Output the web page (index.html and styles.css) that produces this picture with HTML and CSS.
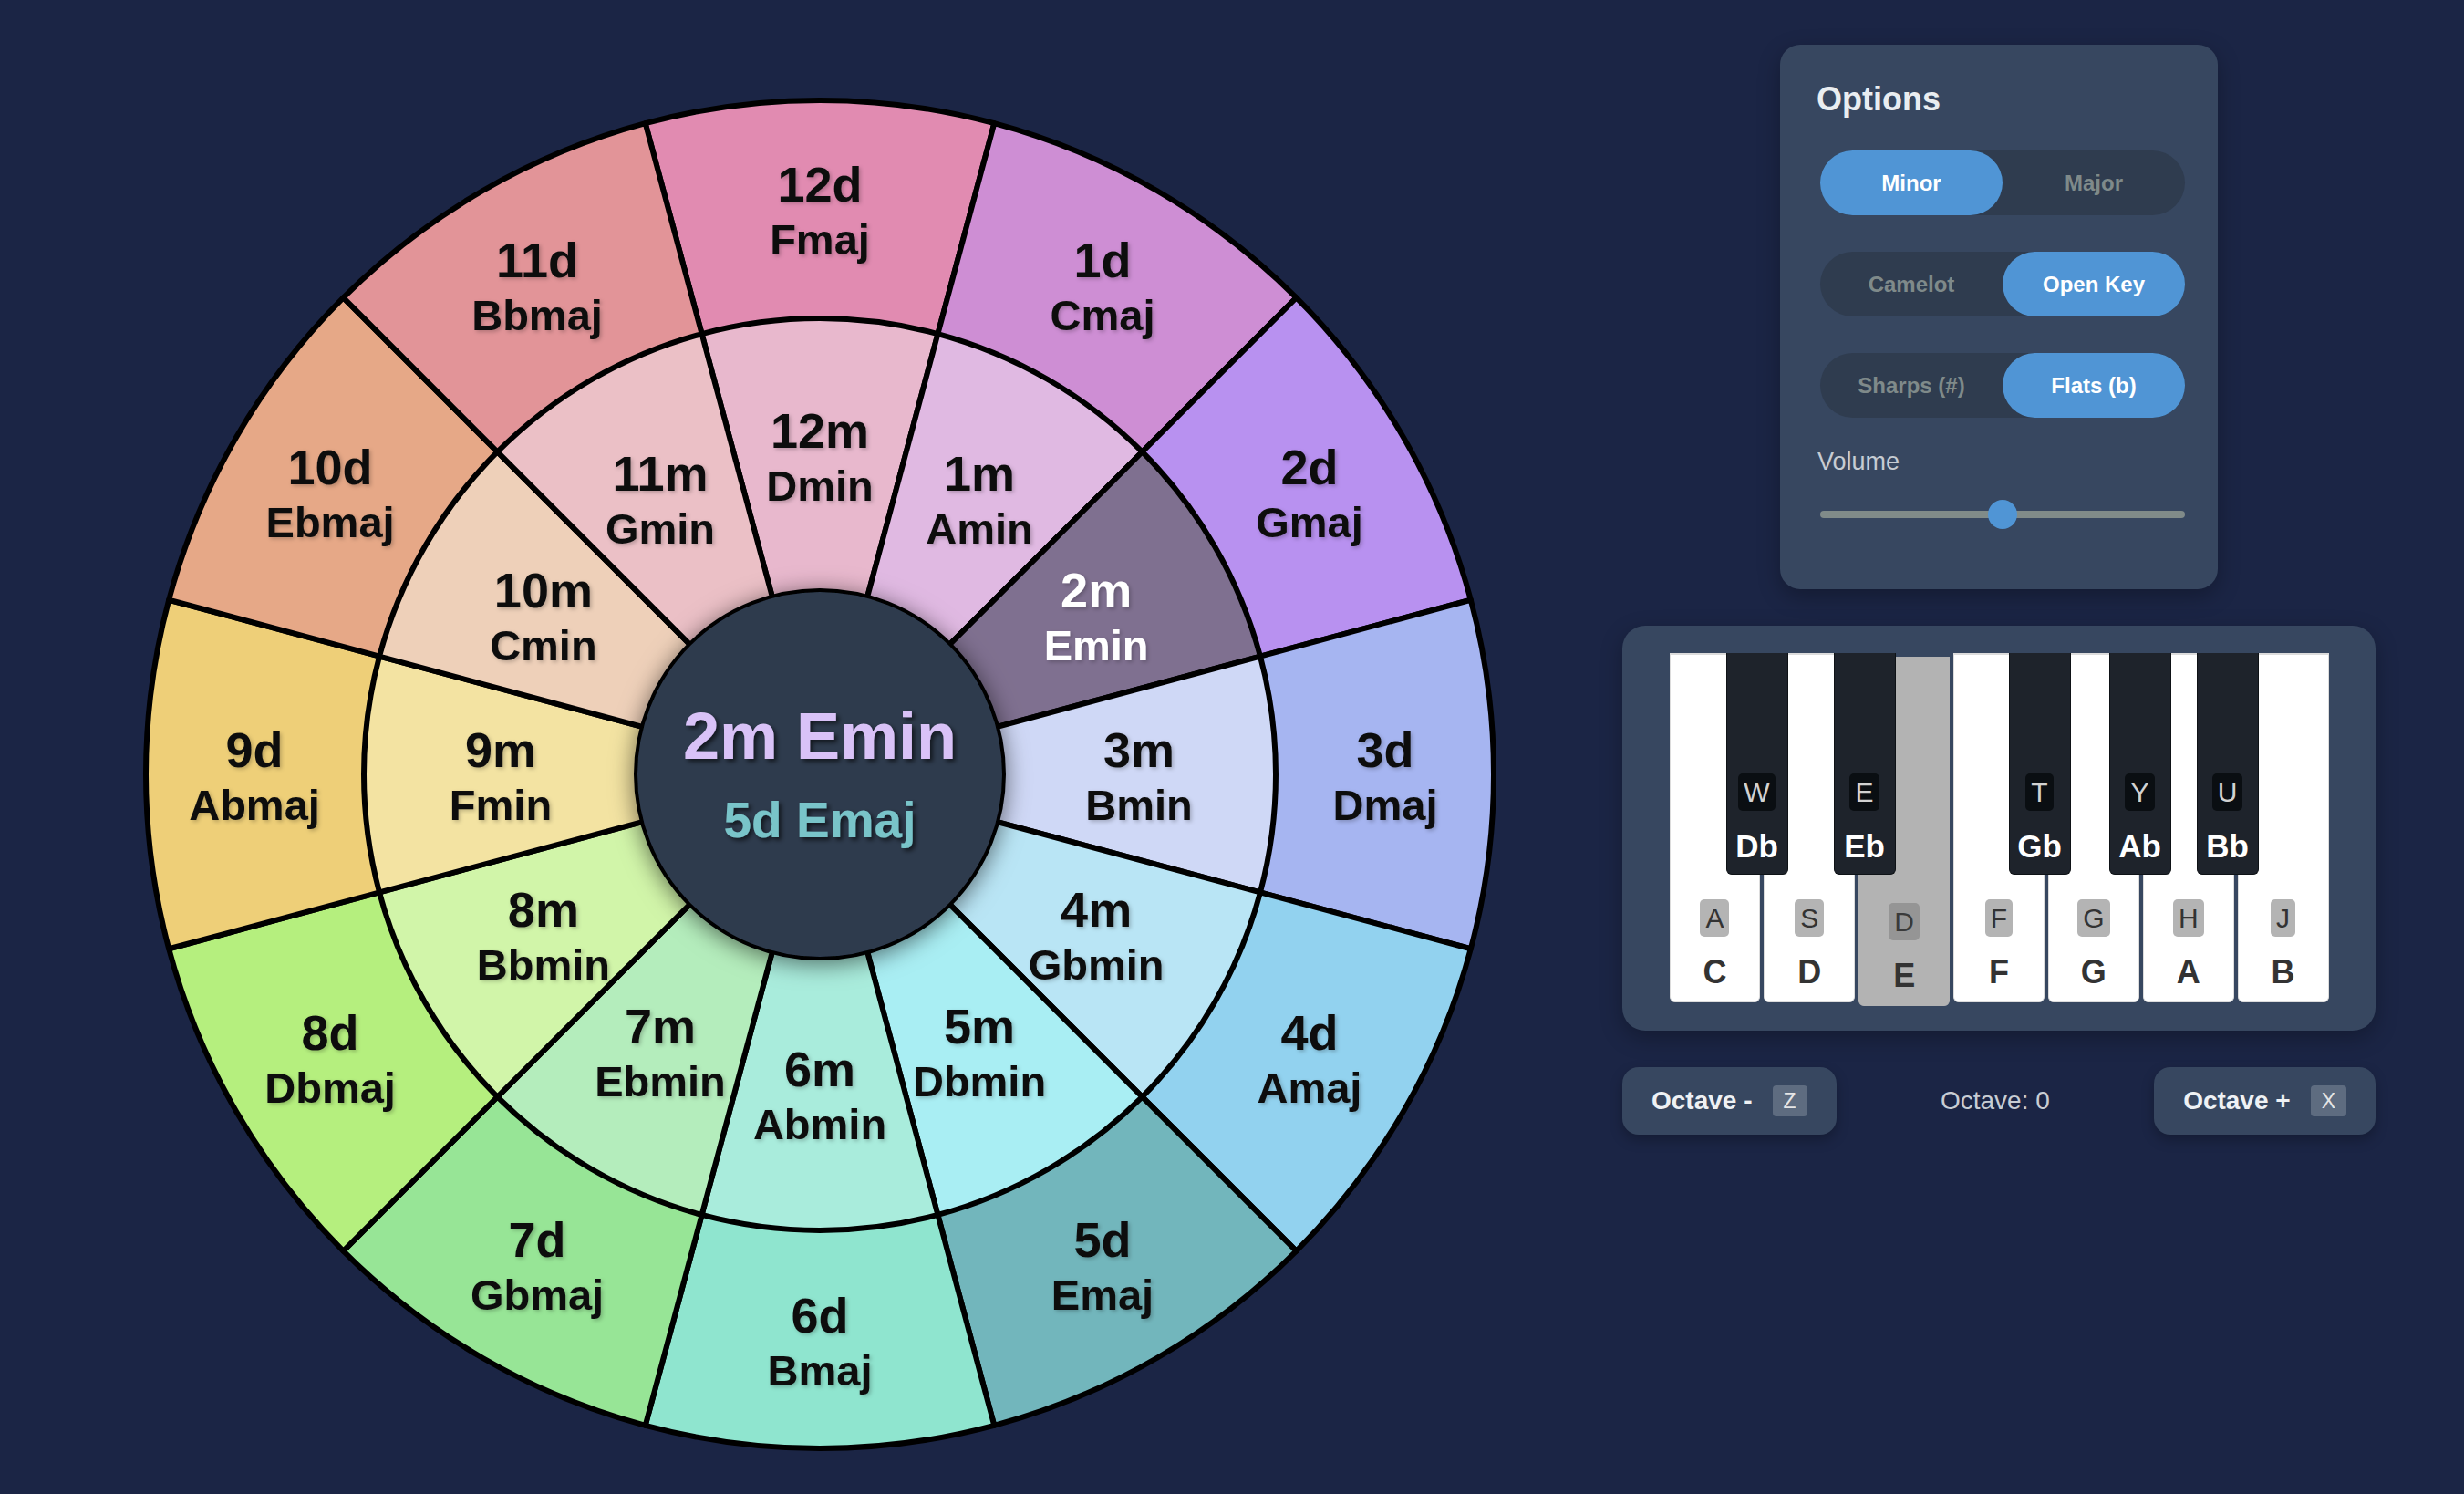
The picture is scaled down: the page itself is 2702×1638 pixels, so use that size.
FILE: index.html
```html
<!DOCTYPE html>
<html lang="en">
<head>
<meta charset="utf-8">
<title>Circle of Fifths</title>
<link rel="stylesheet" href="styles.css">
</head>
<body>
<main class="app">
  <section class="wheel-wrap">
    <svg class="wheel" viewBox="0 0 1480 1480" width="1480" height="1480" xmlns="http://www.w3.org/2000/svg">
      <defs>
        <filter id="hubShadow" x="-40%" y="-40%" width="180%" height="180%">
          <feDropShadow dx="0" dy="4" stdDeviation="13" flood-color="#000" flood-opacity="0.55"/>
        </filter>
        <filter id="txtShadow" x="-10%" y="-30%" width="120%" height="160%">
          <feDropShadow dx="3" dy="3" stdDeviation="2.5" flood-color="#000" flood-opacity="0.6"/>
        </filter>
        <filter id="lblShadow" x="-10%" y="-20%" width="120%" height="140%">
          <feDropShadow dx="2" dy="2" stdDeviation="2" flood-color="#000" flood-opacity="0.22"/>
        </filter>
      </defs>

      <g class="ring-outer">
        <path class="o0" d="M740 740 L548.73 26.18 A739 739 0 0 1 931.27 26.18Z"/>
        <path class="o1" d="M740 740 L931.27 26.18 A739 739 0 0 1 1262.55 217.45Z"/>
        <path class="o2" d="M740 740 L1262.55 217.45 A739 739 0 0 1 1453.82 548.73Z"/>
        <path class="o3" d="M740 740 L1453.82 548.73 A739 739 0 0 1 1453.82 931.27Z"/>
        <path class="o4" d="M740 740 L1453.82 931.27 A739 739 0 0 1 1262.55 1262.55Z"/>
        <path class="o5" d="M740 740 L1262.55 1262.55 A739 739 0 0 1 931.27 1453.82Z"/>
        <path class="o6" d="M740 740 L931.27 1453.82 A739 739 0 0 1 548.73 1453.82Z"/>
        <path class="o7" d="M740 740 L548.73 1453.82 A739 739 0 0 1 217.45 1262.55Z"/>
        <path class="o8" d="M740 740 L217.45 1262.55 A739 739 0 0 1 26.18 931.27Z"/>
        <path class="o9" d="M740 740 L26.18 931.27 A739 739 0 0 1 26.18 548.73Z"/>
        <path class="o10" d="M740 740 L26.18 548.73 A739 739 0 0 1 217.45 217.45Z"/>
        <path class="o11" d="M740 740 L217.45 217.45 A739 739 0 0 1 548.73 26.18Z"/>
      </g>

      <g class="ring-inner">
        <path class="i0" d="M740 740 L610.59 257.04 A500 500 0 0 1 869.41 257.04Z"/>
        <path class="i1" d="M740 740 L869.41 257.04 A500 500 0 0 1 1093.55 386.45Z"/>
        <path class="i2" d="M740 740 L1093.55 386.45 A500 500 0 0 1 1222.96 610.59Z"/>
        <path class="i3" d="M740 740 L1222.96 610.59 A500 500 0 0 1 1222.96 869.41Z"/>
        <path class="i4" d="M740 740 L1222.96 869.41 A500 500 0 0 1 1093.55 1093.55Z"/>
        <path class="i5" d="M740 740 L1093.55 1093.55 A500 500 0 0 1 869.41 1222.96Z"/>
        <path class="i6" d="M740 740 L869.41 1222.96 A500 500 0 0 1 610.59 1222.96Z"/>
        <path class="i7" d="M740 740 L610.59 1222.96 A500 500 0 0 1 386.45 1093.55Z"/>
        <path class="i8" d="M740 740 L386.45 1093.55 A500 500 0 0 1 257.04 869.41Z"/>
        <path class="i9" d="M740 740 L257.04 869.41 A500 500 0 0 1 257.04 610.59Z"/>
        <path class="i10" d="M740 740 L257.04 610.59 A500 500 0 0 1 386.45 386.45Z"/>
        <path class="i11" d="M740 740 L386.45 386.45 A500 500 0 0 1 610.59 257.04Z"/>
      </g>

      <circle class="hub" cx="740" cy="740" r="202"/>

      <g class="labels">
        <g class="lbl" transform="translate(740 120)"><text class="num" y="-8">12d</text><text class="name" y="50">Fmaj</text></g>
        <g class="lbl" transform="translate(1050 203.06)"><text class="num" y="-8">1d</text><text class="name" y="50">Cmaj</text></g>
        <g class="lbl" transform="translate(1276.94 430)"><text class="num" y="-8">2d</text><text class="name" y="50">Gmaj</text></g>
        <g class="lbl" transform="translate(1360 740)"><text class="num" y="-8">3d</text><text class="name" y="50">Dmaj</text></g>
        <g class="lbl" transform="translate(1276.94 1050)"><text class="num" y="-8">4d</text><text class="name" y="50">Amaj</text></g>
        <g class="lbl" transform="translate(1050 1276.94)"><text class="num" y="-8">5d</text><text class="name" y="50">Emaj</text></g>
        <g class="lbl" transform="translate(740 1360)"><text class="num" y="-8">6d</text><text class="name" y="50">Bmaj</text></g>
        <g class="lbl" transform="translate(430 1276.94)"><text class="num" y="-8">7d</text><text class="name" y="50">Gbmaj</text></g>
        <g class="lbl" transform="translate(203.06 1050)"><text class="num" y="-8">8d</text><text class="name" y="50">Dbmaj</text></g>
        <g class="lbl" transform="translate(120 740)"><text class="num" y="-8">9d</text><text class="name" y="50">Abmaj</text></g>
        <g class="lbl" transform="translate(203.06 430)"><text class="num" y="-8">10d</text><text class="name" y="50">Ebmaj</text></g>
        <g class="lbl" transform="translate(430 203.06)"><text class="num" y="-8">11d</text><text class="name" y="50">Bbmaj</text></g>

        <g class="lbl" transform="translate(740 390)"><text class="num" y="-8">12m</text><text class="name" y="50">Dmin</text></g>
        <g class="lbl" transform="translate(915 436.89)"><text class="num" y="-8">1m</text><text class="name" y="50">Amin</text></g>
        <g class="lbl sel" transform="translate(1043.11 565)"><text class="num" y="-8">2m</text><text class="name" y="50">Emin</text></g>
        <g class="lbl" transform="translate(1090 740)"><text class="num" y="-8">3m</text><text class="name" y="50">Bmin</text></g>
        <g class="lbl" transform="translate(1043.11 915)"><text class="num" y="-8">4m</text><text class="name" y="50">Gbmin</text></g>
        <g class="lbl" transform="translate(915 1043.11)"><text class="num" y="-8">5m</text><text class="name" y="50">Dbmin</text></g>
        <g class="lbl" transform="translate(740 1090)"><text class="num" y="-8">6m</text><text class="name" y="50">Abmin</text></g>
        <g class="lbl" transform="translate(565 1043.11)"><text class="num" y="-8">7m</text><text class="name" y="50">Ebmin</text></g>
        <g class="lbl" transform="translate(436.89 915)"><text class="num" y="-8">8m</text><text class="name" y="50">Bbmin</text></g>
        <g class="lbl" transform="translate(390 740)"><text class="num" y="-8">9m</text><text class="name" y="50">Fmin</text></g>
        <g class="lbl" transform="translate(436.89 565)"><text class="num" y="-8">10m</text><text class="name" y="50">Cmin</text></g>
        <g class="lbl" transform="translate(565 436.89)"><text class="num" y="-8">11m</text><text class="name" y="50">Gmin</text></g>
      </g>

      <g class="hub-text">
        <text class="hub-minor" x="740" y="723">2m Emin</text>
        <text class="hub-major" x="740" y="809">5d Emaj</text>
      </g>
    </svg>
  </section>

  <aside class="side">
    <div class="panel options">
      <h2 class="options-title">Options</h2>
      <div class="toggle">
        <button class="toggle-btn active">Minor</button>
        <button class="toggle-btn">Major</button>
      </div>
      <div class="toggle">
        <button class="toggle-btn">Camelot</button>
        <button class="toggle-btn active">Open Key</button>
      </div>
      <div class="toggle">
        <button class="toggle-btn">Sharps (#)</button>
        <button class="toggle-btn active">Flats (b)</button>
      </div>
      <label class="volume-label" for="vol">Volume</label>
      <input class="volume" id="vol" type="range" min="0" max="100" value="50">
    </div>

    <div class="panel piano">
      <div class="keyboard">
        <div class="white-keys">
          <div class="wkey"><span class="kbd">A</span><span class="note">C</span></div>
          <div class="wkey"><span class="kbd">S</span><span class="note">D</span></div>
          <div class="wkey pressed"><span class="kbd">D</span><span class="note">E</span></div>
          <div class="wkey"><span class="kbd">F</span><span class="note">F</span></div>
          <div class="wkey"><span class="kbd">G</span><span class="note">G</span></div>
          <div class="wkey"><span class="kbd">H</span><span class="note">A</span></div>
          <div class="wkey"><span class="kbd">J</span><span class="note">B</span></div>
        </div>
        <div class="bkey bk-db"><span class="kbd">W</span><span class="note">Db</span></div>
        <div class="bkey bk-eb"><span class="kbd">E</span><span class="note">Eb</span></div>
        <div class="bkey bk-gb"><span class="kbd">T</span><span class="note">Gb</span></div>
        <div class="bkey bk-ab"><span class="kbd">Y</span><span class="note">Ab</span></div>
        <div class="bkey bk-bb"><span class="kbd">U</span><span class="note">Bb</span></div>
      </div>
    </div>

    <div class="octave-row">
      <button class="oct-btn">Octave - <span class="oct-kbd">Z</span></button>
      <span class="oct-label">Octave: 0</span>
      <button class="oct-btn">Octave + <span class="oct-kbd">X</span></button>
    </div>
  </aside>
</main>
</body>
</html>
```

FILE: styles.css
```css
* { box-sizing: border-box; }

html, body {
  margin: 0;
  padding: 0;
}

body {
  background: #1b2545;
  font-family: "Liberation Sans", Arial, Helvetica, sans-serif;
  width: 2702px;
  height: 1638px;
  overflow: hidden;
}

.app {
  display: flex;
  align-items: flex-start;
  gap: 140px;
  padding: 49px 0 0 159px;
}

/* ---------- Wheel ---------- */
.wheel-wrap {
  margin-top: 60px;
}

.wheel {
  display: block;
  width: 1480px;
  height: 1480px;
  overflow: visible;
}

.wheel path {
  stroke: #000;
  stroke-width: 6;
  stroke-linejoin: round;
}

.o0 { fill: #e18bb1; }
.o1 { fill: #ce8ed4; }
.o2 { fill: #b891f0; }
.o3 { fill: #a6b5f1; }
.o4 { fill: #92d2ef; }
.o5 { fill: #72b6bc; }
.o6 { fill: #8fe5cf; }
.o7 { fill: #97e596; }
.o8 { fill: #b5ef7e; }
.o9 { fill: #eecf78; }
.o10 { fill: #e6a887; }
.o11 { fill: #e29498; }

.i0 { fill: #e8b8cd; }
.i1 { fill: #e0b9e2; }
.i2 { fill: #7f7090; }
.i3 { fill: #cfd8f6; }
.i4 { fill: #b9e5f5; }
.i5 { fill: #a9eef3; }
.i6 { fill: #a9ecdc; }
.i7 { fill: #b4edbc; }
.i8 { fill: #d1f5a9; }
.i9 { fill: #f3e3a2; }
.i10 { fill: #eed0b9; }
.i11 { fill: #ebc0c6; }

.hub {
  fill: #2e3b4e;
  stroke: #000;
  stroke-width: 4;
  filter: url(#hubShadow);
}

.lbl {
  filter: url(#lblShadow);
}

.lbl text {
  font-family: "Liberation Sans", Arial, Helvetica, sans-serif;
  font-weight: 700;
  text-anchor: middle;
  fill: #111;
}

.lbl .num { font-size: 54px; }
.lbl .name { font-size: 47px; }

.lbl.sel text { fill: #fff; }

.hub-text text {
  font-family: "Liberation Sans", Arial, Helvetica, sans-serif;
  font-weight: 700;
  text-anchor: middle;
  filter: url(#txtShadow);
}

.hub-minor { font-size: 72px; fill: #d9c2f7; }
.hub-major { font-size: 55px; fill: #79c4c9; }

/* ---------- Side column ---------- */
.side {
  width: 826px;
  display: flex;
  flex-direction: column;
  align-items: center;
  gap: 40px;
}

.panel {
  background: #374760;
  box-shadow: 0 8px 24px rgba(0, 0, 0, 0.28);
}

.options {
  width: 480px;
  border-radius: 22px;
  padding: 42px 36px 66px 44px;
  display: flex;
  flex-direction: column;
}

.options-title {
  margin: 0 0 38px -4px;
  font-size: 36px;
  line-height: 36px;
  font-weight: 700;
  color: #e9edf0;
}

.toggle {
  display: flex;
  width: 400px;
  height: 71px;
  background: #2f3c4f;
  border-radius: 36px;
  margin-bottom: 40px;
}

.toggle:last-of-type { margin-bottom: 35px; }

.toggle-btn {
  flex: 1;
  border: none;
  background: transparent;
  border-radius: 36px;
  font-family: "Liberation Sans", Arial, Helvetica, sans-serif;
  font-size: 24px;
  font-weight: 700;
  color: #7f8a8a;
  padding: 0;
}

.toggle-btn.active {
  background: #5095d5;
  color: #fff;
}

.volume-label {
  display: block;
  margin: 0 0 28px -3px;
  font-size: 27px;
  line-height: 27px;
  color: #c6ccd3;
}

.volume {
  -webkit-appearance: none;
  appearance: none;
  width: 400px;
  height: 32px;
  margin: 0;
  background: transparent;
  display: block;
}

.volume::-webkit-slider-runnable-track {
  height: 8px;
  background: #808b89;
  border-radius: 4px;
}

.volume::-webkit-slider-thumb {
  -webkit-appearance: none;
  appearance: none;
  width: 32px;
  height: 32px;
  border-radius: 50%;
  background: #5095d5;
  margin-top: -12px;
  border: none;
}

/* ---------- Piano ---------- */
.piano {
  width: 826px;
  border-radius: 25px;
  padding: 30px 0 31px;
}

.keyboard {
  position: relative;
  width: 723px;
  height: 383px;
  margin: 0 auto;
}

.white-keys {
  display: flex;
  gap: 4px;
  height: 100%;
}

.wkey {
  flex: 1;
  background: #fff;
  border: 1px solid #dcdcdc;
  border-top-width: 2px;
  border-radius: 0 0 6px 6px;
  display: flex;
  flex-direction: column;
  align-items: center;
  justify-content: flex-end;
  padding-bottom: 14px;
}

.wkey.pressed {
  background: #b3b3b3;
  border-color: #b3b3b3;
  transform: translateY(4px);
}

.kbd {
  display: block;
  height: 41px;
  line-height: 41px;
  padding: 0 6px;
  border-radius: 5px;
  font-size: 30px;
  margin-bottom: 21px;
}

.wkey .kbd {
  background: #b4b4b4;
  color: #333;
}

.wkey.pressed .kbd {
  background: #959595;
  color: #3a3a3a;
}

.note {
  display: block;
  font-weight: 700;
  line-height: 1;
}

.wkey .note {
  font-size: 36px;
  color: #333;
}

.bkey {
  position: absolute;
  top: 0;
  width: 68px;
  height: 243px;
  background: #1e232b;
  border: 1px solid #0e1216;
  border-top: none;
  border-radius: 0 0 6px 6px;
  display: flex;
  flex-direction: column;
  align-items: center;
  justify-content: flex-end;
  padding-bottom: 13px;
  z-index: 2;
}

.bkey .kbd {
  background: #0a0e12;
  color: #d2d2d2;
}

.bkey .note {
  font-size: 35px;
  color: #fff;
}

.bk-db { left: 62px; }
.bk-eb { left: 180px; }
.bk-gb { left: 372px; }
.bk-ab { left: 482px; }
.bk-bb { left: 578px; }

/* ---------- Octave row ---------- */
.octave-row {
  width: 826px;
  display: flex;
  align-items: center;
  justify-content: space-between;
}

.oct-btn {
  height: 74px;
  padding: 0 32px;
  display: flex;
  align-items: center;
  gap: 22px;
  border: none;
  border-radius: 18px;
  background: #374760;
  box-shadow: 0 6px 14px rgba(0, 0, 0, 0.25);
  font-family: "Liberation Sans", Arial, Helvetica, sans-serif;
  font-size: 28px;
  font-weight: 700;
  color: #eef1f4;
}

.oct-kbd {
  display: block;
  height: 34px;
  line-height: 34px;
  padding: 0 12px;
  border-radius: 4px;
  background: #5e6c80;
  color: #e6e6e6;
  font-size: 23px;
  font-weight: 400;
}

.oct-label {
  font-size: 28px;
  color: #c8cdd4;
}
```
